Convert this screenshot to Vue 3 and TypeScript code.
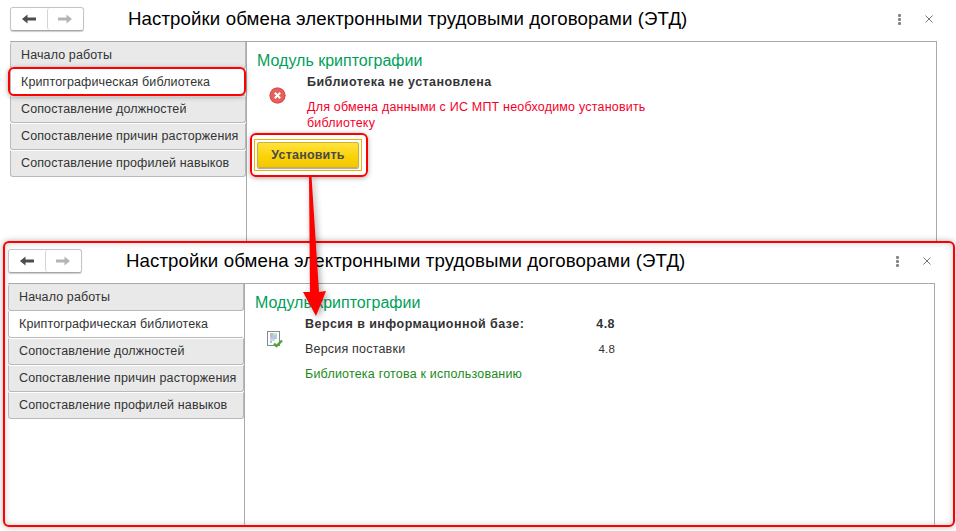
<script setup lang="ts">
const tabs: string[] = [
  'Начало работы',
  'Криптографическая библиотека',
  'Сопоставление должностей',
  'Сопоставление причин расторжения',
  'Сопоставление профилей навыков',
]
const title = 'Настройки обмена электронными трудовыми договорами (ЭТД)'
</script>

<template>
  <div class="page">
    <section class="win win-top">
      <header class="bar">
        <div class="nav">
          <button class="nav-btn"><svg width="14" height="10" viewBox="0 0 14 10"><path d="M0 5 5.500 .5v3H14v3H5.500v3z" fill="#4d4d4d" /></svg></button>
          <button class="nav-btn"><svg width="14" height="10" viewBox="0 0 14 10"><path d="M14 5 8.500 .5v3H0v3h8.500v3z" fill="#b5b5b5" /></svg></button>
        </div>
        <h1 class="title">{{ title }}</h1>
        <span class="kebab"><i></i><i></i><i></i></span>
        <svg class="close" width="8" height="8" viewBox="0 0 8 8"><path d="M.5.5l7 7M7.500.5l-7 7" stroke="#777" stroke-width="1" fill="none" /></svg>
      </header>
      <div class="panel">
        <nav class="tabs">
          <div v-for="(t, i) in tabs" :key="t" class="tab" :class="{ active: i === 1 }">{{ t }}</div>
        </nav>
        <main class="body">
          <h2 class="heading">Модуль криптографии</h2>
          <div class="status">
            <div class="icon-col">
              <svg width="17" height="17" viewBox="0 0 17 17">
                <circle cx="8.500" cy="8.500" r="8" fill="#e8605c" />
                <circle cx="8.500" cy="8.500" r="7.500" fill="none" stroke="#cf4643" stroke-width=".8" />
                <path d="M5.800 5.800l5.400 5.400M11.200 5.800l-5.400 5.400" stroke="#fff" stroke-width="2" />
              </svg>
            </div>
            <div class="msg">
              <div class="strong">Библиотека не установлена</div>
              <div class="err">Для обмена данными с ИС МПТ необходимо установить библиотеку</div>
            </div>
          </div>
          <div class="btn-wrap"><button class="install">Установить</button></div>
        </main>
      </div>
      <div class="hl hl-tab"></div>
      <div class="hl hl-btn"></div>
    </section>

    <section class="win win-bottom">
      <header class="bar">
        <div class="nav">
          <button class="nav-btn"><svg width="14" height="10" viewBox="0 0 14 10"><path d="M0 5 5.500 .5v3H14v3H5.500v3z" fill="#4d4d4d" /></svg></button>
          <button class="nav-btn"><svg width="14" height="10" viewBox="0 0 14 10"><path d="M14 5 8.500 .5v3H0v3h8.500v3z" fill="#b5b5b5" /></svg></button>
        </div>
        <h1 class="title">{{ title }}</h1>
        <span class="kebab"><i></i><i></i><i></i></span>
        <svg class="close" width="8" height="8" viewBox="0 0 8 8"><path d="M.5.5l7 7M7.500.5l-7 7" stroke="#777" stroke-width="1" fill="none" /></svg>
      </header>
      <div class="panel">
        <nav class="tabs">
          <div v-for="(t, i) in tabs" :key="t" class="tab" :class="{ active: i === 1 }">{{ t }}</div>
        </nav>
        <main class="body">
          <h2 class="heading">Модуль криптографии</h2>
          <div class="status">
            <div class="icon-col doc">
              <svg width="16" height="17" viewBox="0 0 16 17">
                <rect x=".5" y=".5" width="12" height="14" fill="#fff" stroke="#7c8a99" />
                <path d="M3 3h3" stroke="#3aa64a" /><path d="M6 3h4" stroke="#8cc98f" />
                <path d="M3 5h2" stroke="#d9534a" /><path d="M5 5h5" stroke="#6f93c4" />
                <path d="M3 7h7" stroke="#6f93c4" />
                <path d="M3 9h5" stroke="#9ab5d6" />
                <path d="M3 11h2" stroke="#4a86c8" />
                <path d="M7 12.500l2.500 2.500L15 9.500" stroke="#4ea82f" stroke-width="2.400" fill="none" />
              </svg>
            </div>
            <div class="versions">
              <span class="strong">Версия в информационной базе:</span><span class="strong val">4.8</span>
              <span>Версия поставки</span><span class="val small">4.8</span>
              <span class="ok">Библиотека готова к использованию</span>
            </div>
          </div>
        </main>
      </div>
    </section>

    <svg class="arrow" width="60" height="160" viewBox="290 170 60 160">
      <path d="M309 176h2.500L319 292l7-1-10 25-13-24 7 0z" fill="#ff0000" />
    </svg>
  </div>
</template>

<style>
body { background: #fff; }
</style>

<style scoped>
.page {
  position: relative;
  width: 956px;
  height: 531px;
  overflow: hidden;
  background: #fff;
  font-family: "Liberation Sans", Arial, sans-serif;
  color: #333;
}
.win { position: relative; box-sizing: border-box; display: flex; flex-direction: column; background: #fff; }
.win-top { height: 241px; padding: 7px 19px 0 10px; }
.win-bottom {
  width: 952px;
  height: 286px;
  margin-left: 3px;
  padding: 6px 18px 0 3px;
  border: 2px solid #f00;
  border-radius: 6px;
  box-shadow: 0 0 6px rgba(0, 0, 0, .3), inset 0 0 6px rgba(0, 0, 0, .2);
}
.bar { display: flex; align-items: center; height: 24px; margin-bottom: 10px; flex: none; }
.nav {
  display: flex;
  box-sizing: border-box;
  width: 74px;
  height: 24px;
  border: 1px solid #c4c4c4;
  border-bottom-color: #a8a8a8;
  border-radius: 3px;
  box-shadow: 0 1px 1px rgba(0, 0, 0, .2);
}
.nav-btn {
  flex: 1;
  display: flex;
  align-items: center;
  justify-content: center;
  padding: 0;
  border: 0;
  background: #fff;
  border-radius: 3px;
}
.nav-btn + .nav-btn { border-left: 1px solid #d4d4d4; }
.title { margin: 0 0 0 44px; font-size: 18.67px; font-weight: 400; color: #000; white-space: nowrap; flex: 1; line-height: 24px; letter-spacing: .1px; }
.kebab { display: flex; flex-direction: column; gap: 1px; margin-right: 24px; }
.kebab i { width: 3px; height: 3px; background: #858585; border-radius: 1px; }
.close { margin-right: 4px; }
.panel { flex: 1; display: flex; border: 1px solid #aaa; border-bottom: 0; border-left: 0; min-height: 0; }
.tabs { width: 236px; flex: none; display: flex; flex-direction: column; }
.tab {
  box-sizing: border-box;
  height: 27px;
  padding-left: 10px;
  line-height: 25px;
  font-size: 12.5px;
  letter-spacing: .12px;
  white-space: nowrap;
  background: #e9e9e9;
  border: 1px solid #b9b9b9;
  border-top-color: #fff;
  border-radius: 0 0 3px 3px;
}
.tab:first-child { border-top: 0; border-radius: 3px 0 3px 3px; padding-top: 1px; }
.tab.active { background: #fff; border-right-color: #fff; }
.body { flex: 1; border-left: 1px solid #aaa; padding: 9px 10px 0; min-width: 0; }
.heading { margin: 0 0 3px; font-size: 16px; font-weight: 400; line-height: 20px; color: #00a05a; }
.status { display: flex; align-items: flex-start; }
.icon-col { width: 50px; flex: none; padding: 13px 0 0 12px; box-sizing: border-box; }
.icon-col.doc { padding: 15px 0 0 12px; }
.msg { width: 350px; font-size: 12.5px; letter-spacing: .2px; }
.strong { font-weight: 700; letter-spacing: .45px; }
.msg .strong { line-height: 16px; margin-bottom: 9px; }
.err { color: #f5002a; line-height: 16px; }
.btn-wrap {
  box-sizing: border-box;
  width: 108px;
  height: 32px;
  margin: 8px 0 0 -3px;
  padding: 2px;
  border: 1px solid #e8b500;
}
.install {
  display: block;
  width: 102px;
  height: 26px;
  padding: 0;
  border: 1px solid #c9b040;
  border-radius: 2px;
  background: linear-gradient(#ffe23f, #fbd20a 55%, #f4c800);
  box-shadow: 0 1px 1px rgba(0, 0, 0, .35);
  font: 700 12.5px "Liberation Sans", Arial, sans-serif;
  color: #4a4a4a;
  letter-spacing: .2px;
}
.versions {
  display: grid;
  grid-template-columns: 270px 40px;
  grid-auto-rows: 25px;
  margin-top: -4px;
  font-size: 12.5px;
  letter-spacing: .2px;
  line-height: 25px;
  white-space: nowrap;
}
.val { text-align: right; }
.val.small { font-size: 11.5px; }
.ok { color: #1b8a1b; grid-column: 1 / 3; }
.hl {
  position: absolute;
  box-sizing: border-box;
  border: 2px solid #f00;
  box-shadow: 0 1px 5px rgba(0, 0, 0, .35);
  border-radius: 6px;
  pointer-events: none;
}
.hl-tab { left: 8px; top: 67px; width: 238px; height: 29px; }
.hl-btn { left: 250px; top: 133px; width: 118px; height: 44px; }
.arrow { position: absolute; left: 290px; top: 170px; filter: drop-shadow(2px 2px 3px rgba(0, 0, 0, .35)); }
</style>
